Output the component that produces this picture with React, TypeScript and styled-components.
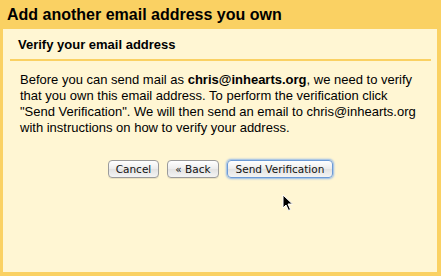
import React from 'react';
import styled, { createGlobalStyle } from 'styled-components';

const GlobalStyle = createGlobalStyle`
  html, body {
    margin: 0;
    padding: 0;
    background: #fad163;
  }
`;

const Dialog = styled.div`
  position: relative;
  width: 441px;
  height: 276px;
  box-sizing: border-box;
  background: #fad163;
  padding: 0 4px 4px 3px;
  display: flex;
  flex-direction: column;
  font-family: 'Liberation Sans', Arial, sans-serif;
  color: #000;
`;

const Title = styled.h1`
  margin: 0;
  height: 29px;
  box-sizing: border-box;
  padding: 5px 0 0 4px;
  font-size: 16px;
  font-weight: bold;
  line-height: 20px;
`;

const Panel = styled.div`
  flex: 1;
  background: #fff6d3;
  padding: 0 6px 0 7px;
  display: flex;
  flex-direction: column;
`;

const Heading = styled.h2`
  margin: 0;
  padding: 8px 0 0 8px;
  height: 32px;
  box-sizing: border-box;
  font-size: 13px;
  font-weight: bold;
  line-height: 16px;
  border-bottom: 2px solid #fad163;
`;

const Message = styled.p`
  margin: 0;
  padding: 11px 0 0 10px;
  font-size: 13px;
  line-height: 16px;
  white-space: nowrap;
`;

const Actions = styled.div`
  display: flex;
  justify-content: center;
  gap: 8px;
  margin-top: 24px;
`;

const Button = styled.button<{ $primary?: boolean }>`
  height: 18px;
  padding: 0 ${(p) => (p.$primary ? 8 : 7)}px;
  font-family: 'DejaVu Sans', 'Lucida Grande', sans-serif;
  font-size: 10.5px;
  line-height: 14px;
  color: #111;
  background: linear-gradient(#ffffff, #ececec 50%, #e2e2e2 51%, #f4f4f4);
  border: 1px solid ${(p) => (p.$primary ? '#6d9bd6' : '#9b9b9b')};
  border-radius: 4px;
  box-shadow: ${(p) => (p.$primary ? '0 0 2px 1px #8fb6ea' : '0 1px 0 rgba(0,0,0,0.08)')};
`;

const Cursor = styled.svg`
  position: absolute;
  left: 282px;
  top: 194px;
`;

export default function App() {
  return (
    <>
      <GlobalStyle />
      <Dialog>
        <Title>Add another email address you own</Title>
        <Panel>
          <Heading>Verify your email address</Heading>
          <Message>
            Before you can send mail as <b>chris@inhearts.org</b>, we need to verify
            <br />
            that you own this email address. To perform the verification click
            <br />
            "Send Verification". We will then send an email to chris@inhearts.org
            <br />
            with instructions on how to verify your address.
          </Message>
          <Actions>
            <Button>Cancel</Button>
            <Button>« Back</Button>
            <Button $primary>Send Verification</Button>
          </Actions>
        </Panel>
        <Cursor width="12" height="18" viewBox="0 0 12 18">
          <path
            d="M1 1 L1 14 L4 11 L6.5 16.5 L8.5 15.5 L6 10 L10.5 10 Z"
            fill="#000"
            stroke="#fff"
            strokeWidth="1"
            strokeLinejoin="round"
          />
        </Cursor>
      </Dialog>
    </>
  );
}
